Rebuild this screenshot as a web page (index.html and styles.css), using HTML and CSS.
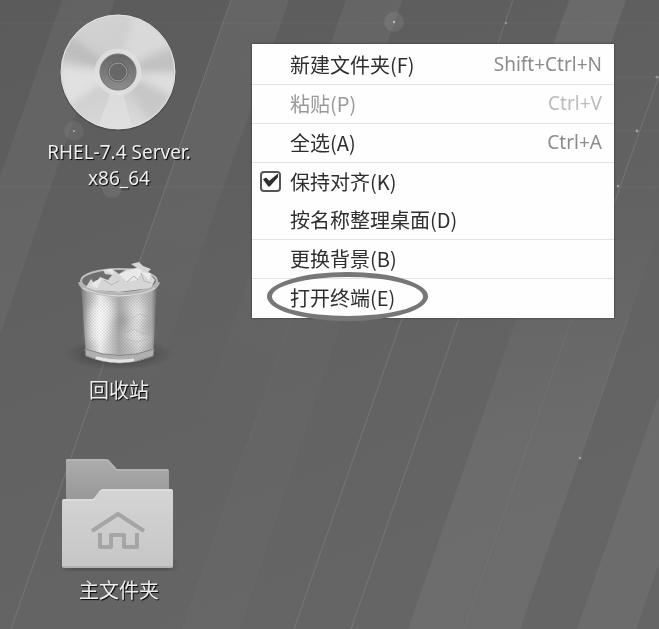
FILE: index.html
```html
<!DOCTYPE html>
<html lang="zh-CN">
<head>
  <meta charset="UTF-8" />
  <title>桌面</title>
  <link rel="stylesheet" href="styles.css">
</head>
<body>

  <svg class="wallpaper" viewBox="0 0 659 629" preserveAspectRatio="xMidYMid slice" aria-hidden="true">
    <defs>
      <linearGradient id="sky" x1="0" y1="0" x2="0.4" y2="1">
        <stop offset="0" stop-color="#5b5b5b" />
        <stop offset="0.5" stop-color="#616161" />
        <stop offset="1" stop-color="#656565" />
      </linearGradient>
      <linearGradient id="beam" x1="0" y1="0" x2="0" y2="1">
        <stop offset="0" stop-color="#fff" stop-opacity="0.05" />
        <stop offset="0.7" stop-color="#fff" stop-opacity="0" />
      </linearGradient>
      <linearGradient id="glow" x1="0" y1="0" x2="0" y2="1">
        <stop offset="0.3" stop-color="#fff" stop-opacity="0" />
        <stop offset="0.7" stop-color="#fff" stop-opacity="0.05" />
      </linearGradient>
    </defs>
    <rect width="659" height="629" fill="url(#sky)" />
    <g fill="#fff">
      <path d="M62 0H115L0 335V177z" opacity="0.045" />
      <path d="M231 0H289L68 629H10z" fill="url(#beam)" />
      <path d="M346 0H402L181 629H125z" fill="url(#beam)" />
      <path d="M569 0H626L515 318H457z" opacity="0.07" />
      <path d="M290 318H343L240 629H183z" opacity="0.015" />
      <path d="M628 0H740L520 629H408z" fill="url(#glow)" />
      <path d="M659 395V563L636 629H577z" opacity="0.05" />
    </g>
    <g fill="none" stroke="#fff" stroke-opacity="0.12">
      <path d="M231 0L11 629" />
      <path d="M402 0L183 629" stroke-opacity="0.03" />
      <path d="M513 0L294 629" />
      <path d="M459 318L351 629" />
      <path d="M572 318L464 629" stroke-opacity="0.05" />
      <path d="M628 318L580 458" stroke-opacity="0.06" />
      <path d="M659 76L577 310" />
      <path d="M0 23H659M614 77H659M614 131H659M0 187H659" stroke-opacity="0.04" />
    </g>
    <g fill="#fff">
      <circle cx="394" cy="22" r="10" opacity="0.08" />
      <circle cx="74" cy="131" r="10" opacity="0.06" />
      <circle cx="112" cy="188" r="10" opacity="0.08" />
      <circle cx="394" cy="22" r="1.2" opacity="0.5" />
      <circle cx="74" cy="131" r="1" opacity="0.5" />
      <circle cx="506" cy="23" r="1.2" opacity="0.3" />
      <circle cx="657" cy="77" r="1.6" opacity="0.3" />
      <circle cx="637" cy="131" r="1.4" opacity="0.4" />
      <circle cx="618" cy="186" r="1.2" opacity="0.4" />
      <circle cx="580" cy="458" r="1.3" opacity="0.4" />
    </g>
  </svg>

  <main class="icons">
    <a class="icon disc" href="#disc">
      <svg width="120" height="120" viewBox="0 0 120 120" aria-hidden="true">
        <defs>
          <linearGradient id="disc" x1="0.3" y1="0" x2="0.6" y2="1">
            <stop offset="0" stop-color="#d2d2d2" />
            <stop offset="0.5" stop-color="#cccccc" />
            <stop offset="1" stop-color="#dadada" />
          </linearGradient>
          <linearGradient id="hub" x1="0" y1="0" x2="0" y2="1">
            <stop offset="0" stop-color="#666" />
            <stop offset="1" stop-color="#8d8d8d" />
          </linearGradient>
          <filter id="soft"><feGaussianBlur stdDeviation="4" /></filter>
          <clipPath id="discEdge"><circle cx="59" cy="60" r="56" /></clipPath>
        </defs>
        <circle cx="59" cy="61" r="58" fill="#444" opacity="0.5" />
        <circle cx="59" cy="60" r="57" fill="url(#disc)" stroke="#e6e6e6" />
        <g clip-path="url(#discEdge)">
          <path d="M59 60L-4 44L8 22z" fill="#aaa" opacity="0.5" filter="url(#soft)" />
          <path d="M59 60L0 54V100z" fill="#eee" opacity="0.6" filter="url(#soft)" />
          <path d="M59 60L76 0H118V30z" fill="#e4e4e4" opacity="0.5" filter="url(#soft)" />
          <path d="M59 60L120 36V60z" fill="#b9b9b9" opacity="0.6" filter="url(#soft)" />
          <path d="M59 60L120 62V90z" fill="#e6e6e6" opacity="0.6" filter="url(#soft)" />
          <path d="M59 60L114 84L92 112z" fill="#bebebe" opacity="0.6" filter="url(#soft)" />
          <path d="M59 60L37 120H74z" fill="#e6e6e6" opacity="0.5" />
        </g>
        <circle cx="59" cy="60" r="21" fill="none" stroke="#e2e2e2" stroke-width="5" opacity="0.7" />
        <circle cx="59" cy="60" r="18" fill="url(#hub)" stroke="#777" />
        <circle cx="59" cy="60" r="9" fill="#666" stroke="#a0a0a0" />
        <circle cx="59" cy="60" r="10" fill="none" stroke="#555" stroke-opacity="0.6" />
      </svg>
      <span>RHEL-7.4 Server.<br>x86_64</span>
    </a>

    <a class="icon" href="#trash">
      <svg width="120" height="120" viewBox="0 0 120 120" aria-hidden="true">
        <defs>
          <linearGradient id="can" x1="0" y1="0" x2="1" y2="0">
            <stop offset="0" stop-color="#777" />
            <stop offset="0.08" stop-color="#aaa" />
            <stop offset="0.25" stop-color="#f0f0f0" />
            <stop offset="0.5" stop-color="#acacac" />
            <stop offset="0.75" stop-color="#d0d0d0" />
            <stop offset="0.93" stop-color="#aaa" />
            <stop offset="1" stop-color="#666" />
          </linearGradient>
          <radialGradient id="shade">
            <stop offset="0.3" stop-color="#333" stop-opacity="0.6" />
            <stop offset="1" stop-color="#333" stop-opacity="0" />
          </radialGradient>
          <pattern id="mesh" width="3" height="3" patternUnits="userSpaceOnUse">
            <path d="M0 0L3 3M3 0L0 3" stroke="#555" stroke-width="0.5" opacity="0.2" />
          </pattern>
        </defs>
        <ellipse cx="60" cy="103" rx="54" ry="16" fill="url(#shade)" />
        <ellipse cx="60" cy="30" rx="38" ry="12" fill="#6e6e6e" stroke="#bdbdbd" stroke-width="2" />
        <path d="M27 36L32 28L36 33L41 26L49 29L53 24L46 23L44 19L53 18L60 23L68 18L78 17L72 13L80 11L84 15L92 18L89 21L96 29L92 37L60 41L35 39z" fill="#d6d6d6" />
        <path d="M60 23L78 17L84 19L78 29L68 31zM36 30L43 27L38 37L32 34zM45 19L53 18L55 23zM82 21L92 22L90 30z" fill="#e9e9e9" />
        <path d="M68 31L75 25L79 29M45 29L52 34L60 30M82 22L85 30L91 32" fill="none" stroke="#b4b4b4" />
        <path d="M22 34Q60 52 98 34L94 105Q61 119 27 105z" fill="url(#can)" />
        <g filter="url(#soft)">
          <path d="M31 58L50 47L54 62L44 94L30 88z" fill="#fff" opacity="0.7" />
          <path d="M68 48L87 57L82 73L92 84L84 96L67 87L74 72z" fill="#eee" opacity="0.7" />
          <path d="M56 62L71 66L65 77L55 78zM79 79L90 72V91z" fill="#888" opacity="0.4" />
        </g>
        <path d="M65 82L75 78L84 83L92 81M67 88L78 91L88 88M73 67L81 63L89 66" fill="none" stroke="#999" opacity="0.3" />
        <path d="M22 34Q60 52 98 34L94 105Q61 119 27 105z" fill="url(#mesh)" />
        <path d="M26 98Q61 111 95 98L94 105Q61 119 27 105z" fill="#b0b0b0" stroke="#858585" />
        <path d="M38 107Q56 112 74 109" fill="none" stroke="#e4e4e4" stroke-width="3" stroke-linecap="round" />
        <path d="M21 31Q23 43 60 44Q97 43 99 31" fill="none" stroke="#b4b4b4" stroke-width="4" />
        <path d="M24 37Q36 44 60 45Q86 44 96 37" fill="none" stroke="#ddd" />
      </svg>
      <span>回收站</span>
    </a>

    <a class="icon" href="#home">
      <svg width="120" height="120" viewBox="0 0 120 120" aria-hidden="true">
        <defs>
          <linearGradient id="back" x1="0" y1="0" x2="0" y2="1">
            <stop offset="0" stop-color="#acacac" />
            <stop offset="1" stop-color="#929292" />
          </linearGradient>
          <linearGradient id="front" x1="0" y1="0" x2="0" y2="1">
            <stop offset="0" stop-color="#d4d4d4" />
            <stop offset="1" stop-color="#c6c6c6" />
          </linearGradient>
        </defs>
        <rect x="6" y="109" width="108" height="10" rx="4" fill="#333" opacity="0.5" filter="url(#soft)" />
        <path d="M8 8H47Q49 8 50 9L58 18H108Q110 18 110 20V60H7V9Q7 8 8 8z" fill="url(#back)" />
        <path d="M8 9H48L57 19H109" fill="none" stroke="#bbb" />
        <path d="M5 48H33Q35 48 37 46L41 40Q43 38 45 38H112Q114 38 114 40V115Q114 117 112 117H5Q3 117 3 115V50Q3 48 5 48z" fill="url(#front)" />
        <path d="M4 49H34L42 39H113" fill="none" stroke="#e4e4e4" />
        <path d="M4 116H113" stroke="#a0a0a0" />
        <path d="M33 80L59 63L85 80M41 82V96H52V84H65V96H78V82" fill="none" stroke="#a5a5a5" stroke-width="4" stroke-linejoin="round" />
      </svg>
      <span>主文件夹</span>
    </a>
  </main>

  <div class="menu">
    <button class="item">新建文件夹(F)<kbd>Shift+Ctrl+N</kbd></button>
    <hr>
    <button class="item" disabled>粘贴(P)<kbd>Ctrl+V</kbd></button>
    <hr>
    <button class="item">全选(A)<kbd>Ctrl+A</kbd></button>
    <hr>
    <label class="item check"><input type="checkbox" checked>保持对齐(K)</label>
    <button class="item">按名称整理桌面(D)</button>
    <hr>
    <button class="item">更换背景(B)</button>
    <hr>
    <button class="item marked">打开终端(E)</button>
  </div>

</body>
</html>
```
FILE: styles.css
```css
*,
*::after {
  box-sizing: border-box;
}

body {
  margin: 0;
  min-height: 100vh;
  background-color: #616161;
  font-family: "Noto Sans", "Noto Sans CJK SC", sans-serif;
}

.wallpaper {
  position: fixed;
  inset: 0;
  width: 100%;
  height: 100%;
}

/* desktop icons */
.icons {
  position: relative;
  display: flex;
  flex-direction: column;
  gap: 47px;
  width: 238px;
  padding-top: 12px;
}

.icon {
  display: flex;
  flex-direction: column;
  align-items: center;
  gap: 7px;
  color: #eee;
  font-size: 20px;
  line-height: 26px;
  text-align: center;
  text-decoration: none;
  text-shadow: 1px 1px 1px #000;
}

.icon.disc {
  padding-bottom: 13px;
  font-size: 19px;
}

/* context menu */
.menu {
  position: absolute;
  top: 44px;
  left: 252px;
  width: 362px;
  padding: 2px 0 1px;
  background-color: #fefefe;
  box-shadow: 0 0 2px #333;
}

.menu hr {
  height: 1px;
  margin: 0;
  border: none;
  background-color: #e2e2e2;
}

.item {
  position: relative;
  display: flex;
  align-items: center;
  width: 100%;
  height: 38px;
  padding: 0 12px 2px 38px;
  border: none;
  background: none;
  color: #2e2e2e;
  font-family: "Noto Sans CJK SC", sans-serif;
  font-size: 20px;
  text-align: left;
}

.item:disabled {
  color: #999;
}

.item kbd {
  margin-left: auto;
  color: #8c8c8c;
  font-family: "Noto Sans", sans-serif;
  font-size: 19px;
}

.item:disabled kbd {
  color: #bbb;
}

.check {
  gap: 9px;
  padding-left: 8px;
}

.check input {
  appearance: none;
  width: 21px;
  height: 21px;
  margin: 0;
  border: 2px solid #555;
  border-radius: 4px;
}

.check input:checked::after {
  content: "";
  display: block;
  width: 15px;
  height: 13px;
  margin: 1px;
  background-color: #2e2e2e;
  clip-path: polygon(0 45%, 20% 30%, 42% 55%, 100% 0, 100% 28%, 45% 100%, 35% 100%);
}

.marked::after {
  content: "";
  position: absolute;
  top: -7px;
  left: 15px;
  width: 161px;
  height: 49px;
  border: 5px solid #777;
  border-radius: 50%;
}
```
